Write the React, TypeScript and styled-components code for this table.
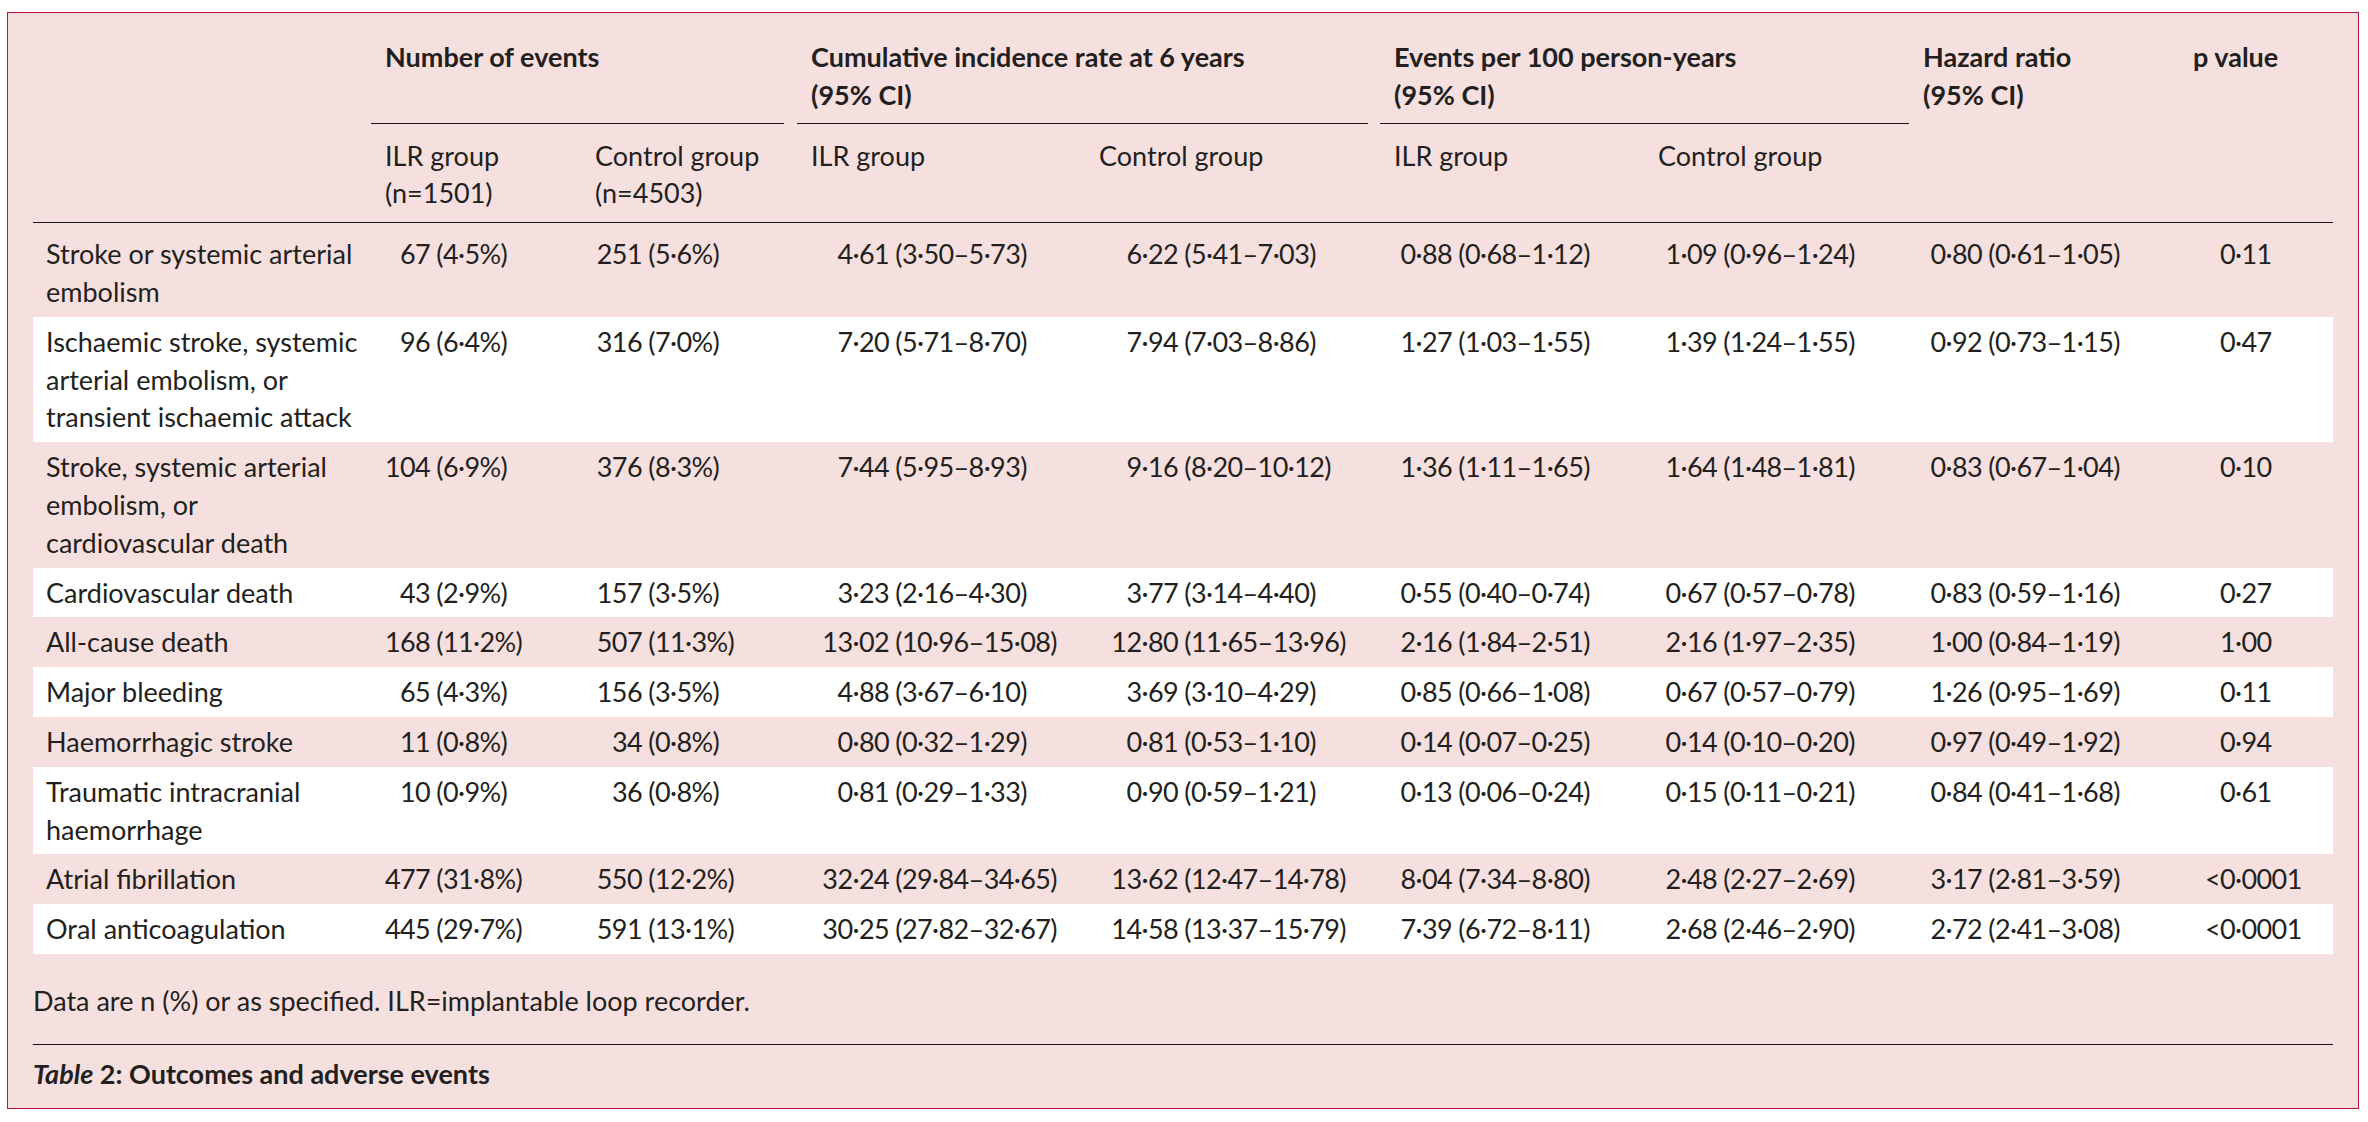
import React from "react";
import styled, { createGlobalStyle } from "styled-components";

const GlobalStyle = createGlobalStyle`
  body {
    margin: 0;
    background: #ffffff;
    color: #231f20;
    font-family: Lato, "Liberation Sans", sans-serif;
    font-size: 27px;
    line-height: 37.8px;
  }
`;

const Page = styled.div`
  padding: 12px 9px 13px 7px;
`;

const Panel = styled.section`
  border: 1px solid #c0103a;
  background: #f6e0df;
  padding: 19px 25px 15px 25px;
`;

const Table = styled.table`
  width: 100%;
  border-collapse: collapse;
  table-layout: fixed;
`;

const Col = styled.col<{ $w: number }>`
  width: ${(p) => p.$w}px;
`;

const THead = styled.thead`
  border-bottom: 1px solid #1a1617;
`;

const GroupCell = styled.th`
  padding: 0;
  text-align: left;
  vertical-align: top;
  font-weight: 700;
`;

const GroupLabel = styled.div<{ $gap: number }>`
  padding: 6px 0 9px 14px;
  margin-right: ${(p) => p.$gap}px;
  border-bottom: 1px solid #1a1617;
  white-space: nowrap;
`;

const SpanHead = styled.th`
  padding: 6px 0 0 14px;
  text-align: left;
  vertical-align: top;
  font-weight: 700;
  white-space: nowrap;
`;

const SubHead = styled.th`
  padding: 13px 0 10px 14px;
  text-align: left;
  vertical-align: top;
  font-weight: 400;
  white-space: nowrap;
`;

const Row = styled.tr`
  &:nth-child(even) {
    background: #ffffff;
  }
  &:first-child td {
    padding-top: 12px;
  }
`;

const LabelCell = styled.td`
  padding: 6px 0 6px 13px;
  vertical-align: top;
  white-space: nowrap;
`;

const Cell = styled.td`
  padding: 6px 0 6px 14px;
  vertical-align: top;
  white-space: nowrap;
  letter-spacing: -0.6px;
`;

const Lead = styled.span<{ $w: number }>`
  display: inline-block;
  width: ${(p) => p.$w}px;
  text-align: right;
`;

const Footnote = styled.p`
  margin: 0;
  padding: 28px 0 24px;
  border-bottom: 1px solid #1a1617;
`;

const Caption = styled.p`
  margin: 0;
  padding-top: 10px;
  font-weight: 700;

  em {
    font-style: italic;
  }
`;

// column widths and the width of the aligned part before "(" or "·"
const widths = [338, 210, 216, 288, 295, 264, 265, 270, 154];
const leads = [45, 47, 78, 79, 58, 59, 59, 42];

type Outcome = { label: string[]; values: string[] };

const outcomes: Outcome[] = [
  {
    label: ["Stroke or systemic arterial", "embolism"],
    values: ["67 (4·5%)", "251 (5·6%)", "4·61 (3·50–5·73)", "6·22 (5·41–7·03)", "0·88 (0·68–1·12)", "1·09 (0·96–1·24)", "0·80 (0·61–1·05)", "0·11"],
  },
  {
    label: ["Ischaemic stroke, systemic", "arterial embolism, or", "transient ischaemic attack"],
    values: ["96 (6·4%)", "316 (7·0%)", "7·20 (5·71–8·70)", "7·94 (7·03–8·86)", "1·27 (1·03–1·55)", "1·39 (1·24–1·55)", "0·92 (0·73–1·15)", "0·47"],
  },
  {
    label: ["Stroke, systemic arterial", "embolism, or", "cardiovascular death"],
    values: ["104 (6·9%)", "376 (8·3%)", "7·44 (5·95–8·93)", "9·16 (8·20–10·12)", "1·36 (1·11–1·65)", "1·64 (1·48–1·81)", "0·83 (0·67–1·04)", "0·10"],
  },
  {
    label: ["Cardiovascular death"],
    values: ["43 (2·9%)", "157 (3·5%)", "3·23 (2·16–4·30)", "3·77 (3·14–4·40)", "0·55 (0·40–0·74)", "0·67 (0·57–0·78)", "0·83 (0·59–1·16)", "0·27"],
  },
  {
    label: ["All-cause death"],
    values: ["168 (11·2%)", "507 (11·3%)", "13·02 (10·96–15·08)", "12·80 (11·65–13·96)", "2·16 (1·84–2·51)", "2·16 (1·97–2·35)", "1·00 (0·84–1·19)", "1·00"],
  },
  {
    label: ["Major bleeding"],
    values: ["65 (4·3%)", "156 (3·5%)", "4·88 (3·67–6·10)", "3·69 (3·10–4·29)", "0·85 (0·66–1·08)", "0·67 (0·57–0·79)", "1·26 (0·95–1·69)", "0·11"],
  },
  {
    label: ["Haemorrhagic stroke"],
    values: ["11 (0·8%)", "34 (0·8%)", "0·80 (0·32–1·29)", "0·81 (0·53–1·10)", "0·14 (0·07–0·25)", "0·14 (0·10–0·20)", "0·97 (0·49–1·92)", "0·94"],
  },
  {
    label: ["Traumatic intracranial", "haemorrhage"],
    values: ["10 (0·9%)", "36 (0·8%)", "0·81 (0·29–1·33)", "0·90 (0·59–1·21)", "0·13 (0·06–0·24)", "0·15 (0·11–0·21)", "0·84 (0·41–1·68)", "0·61"],
  },
  {
    label: ["Atrial fibrillation"],
    values: ["477 (31·8%)", "550 (12·2%)", "32·24 (29·84–34·65)", "13·62 (12·47–14·78)", "8·04 (7·34–8·80)", "2·48 (2·27–2·69)", "3·17 (2·81–3·59)", "<0·0001"],
  },
  {
    label: ["Oral anticoagulation"],
    values: ["445 (29·7%)", "591 (13·1%)", "30·25 (27·82–32·67)", "14·58 (13·37–15·79)", "7·39 (6·72–8·11)", "2·68 (2·46–2·90)", "2·72 (2·41–3·08)", "<0·0001"],
  },
];

// split so that the "(" (or the decimal point for p values) lines up down a column
function split(value: string): [string, string] {
  const paren = value.indexOf(" (");
  if (paren >= 0) return [value.slice(0, paren), value.slice(paren)];
  const dot = value.indexOf("·");
  return [value.slice(0, dot), value.slice(dot)];
}

function Lines({ lines }: { lines: string[] }) {
  return (
    <>
      {lines.map((line, i) => (
        <React.Fragment key={i}>
          {i > 0 && <br />}
          {line}
        </React.Fragment>
      ))}
    </>
  );
}

export default function App() {
  return (
    <>
      <GlobalStyle />
      <Page>
        <Panel>
          <Table>
            <colgroup>
              {widths.map((w, i) => (
                <Col key={i} $w={w} />
              ))}
            </colgroup>
            <THead>
              <tr>
                <th rowSpan={2} />
                <GroupCell colSpan={2}>
                  <GroupLabel $gap={13}>
                    Number of events
                    <br />
                    &nbsp;
                  </GroupLabel>
                </GroupCell>
                <GroupCell colSpan={2}>
                  <GroupLabel $gap={12}>
                    Cumulative incidence rate at 6 years
                    <br />
                    (95% CI)
                  </GroupLabel>
                </GroupCell>
                <GroupCell colSpan={2}>
                  <GroupLabel $gap={0}>
                    Events per 100 person-years
                    <br />
                    (95% CI)
                  </GroupLabel>
                </GroupCell>
                <SpanHead rowSpan={2}>
                  Hazard ratio
                  <br />
                  (95% CI)
                </SpanHead>
                <SpanHead rowSpan={2}>p value</SpanHead>
              </tr>
              <tr>
                <SubHead>
                  ILR group
                  <br />
                  (n=1501)
                </SubHead>
                <SubHead>
                  Control group
                  <br />
                  (n=4503)
                </SubHead>
                <SubHead>ILR group</SubHead>
                <SubHead>Control group</SubHead>
                <SubHead>ILR group</SubHead>
                <SubHead>Control group</SubHead>
              </tr>
            </THead>
            <tbody>
              {outcomes.map((o) => (
                <Row key={o.label.join(" ")}>
                  <LabelCell>
                    <Lines lines={o.label} />
                  </LabelCell>
                  {o.values.map((v, i) => {
                    const [lead, rest] = split(v);
                    return (
                      <Cell key={i}>
                        <Lead $w={leads[i]}>{lead}</Lead>
                        {rest}
                      </Cell>
                    );
                  })}
                </Row>
              ))}
            </tbody>
          </Table>
          <Footnote>Data are n (%) or as specified. ILR=implantable loop recorder.</Footnote>
          <Caption>
            <em>Table</em> 2: Outcomes and adverse events
          </Caption>
        </Panel>
      </Page>
    </>
  );
}
